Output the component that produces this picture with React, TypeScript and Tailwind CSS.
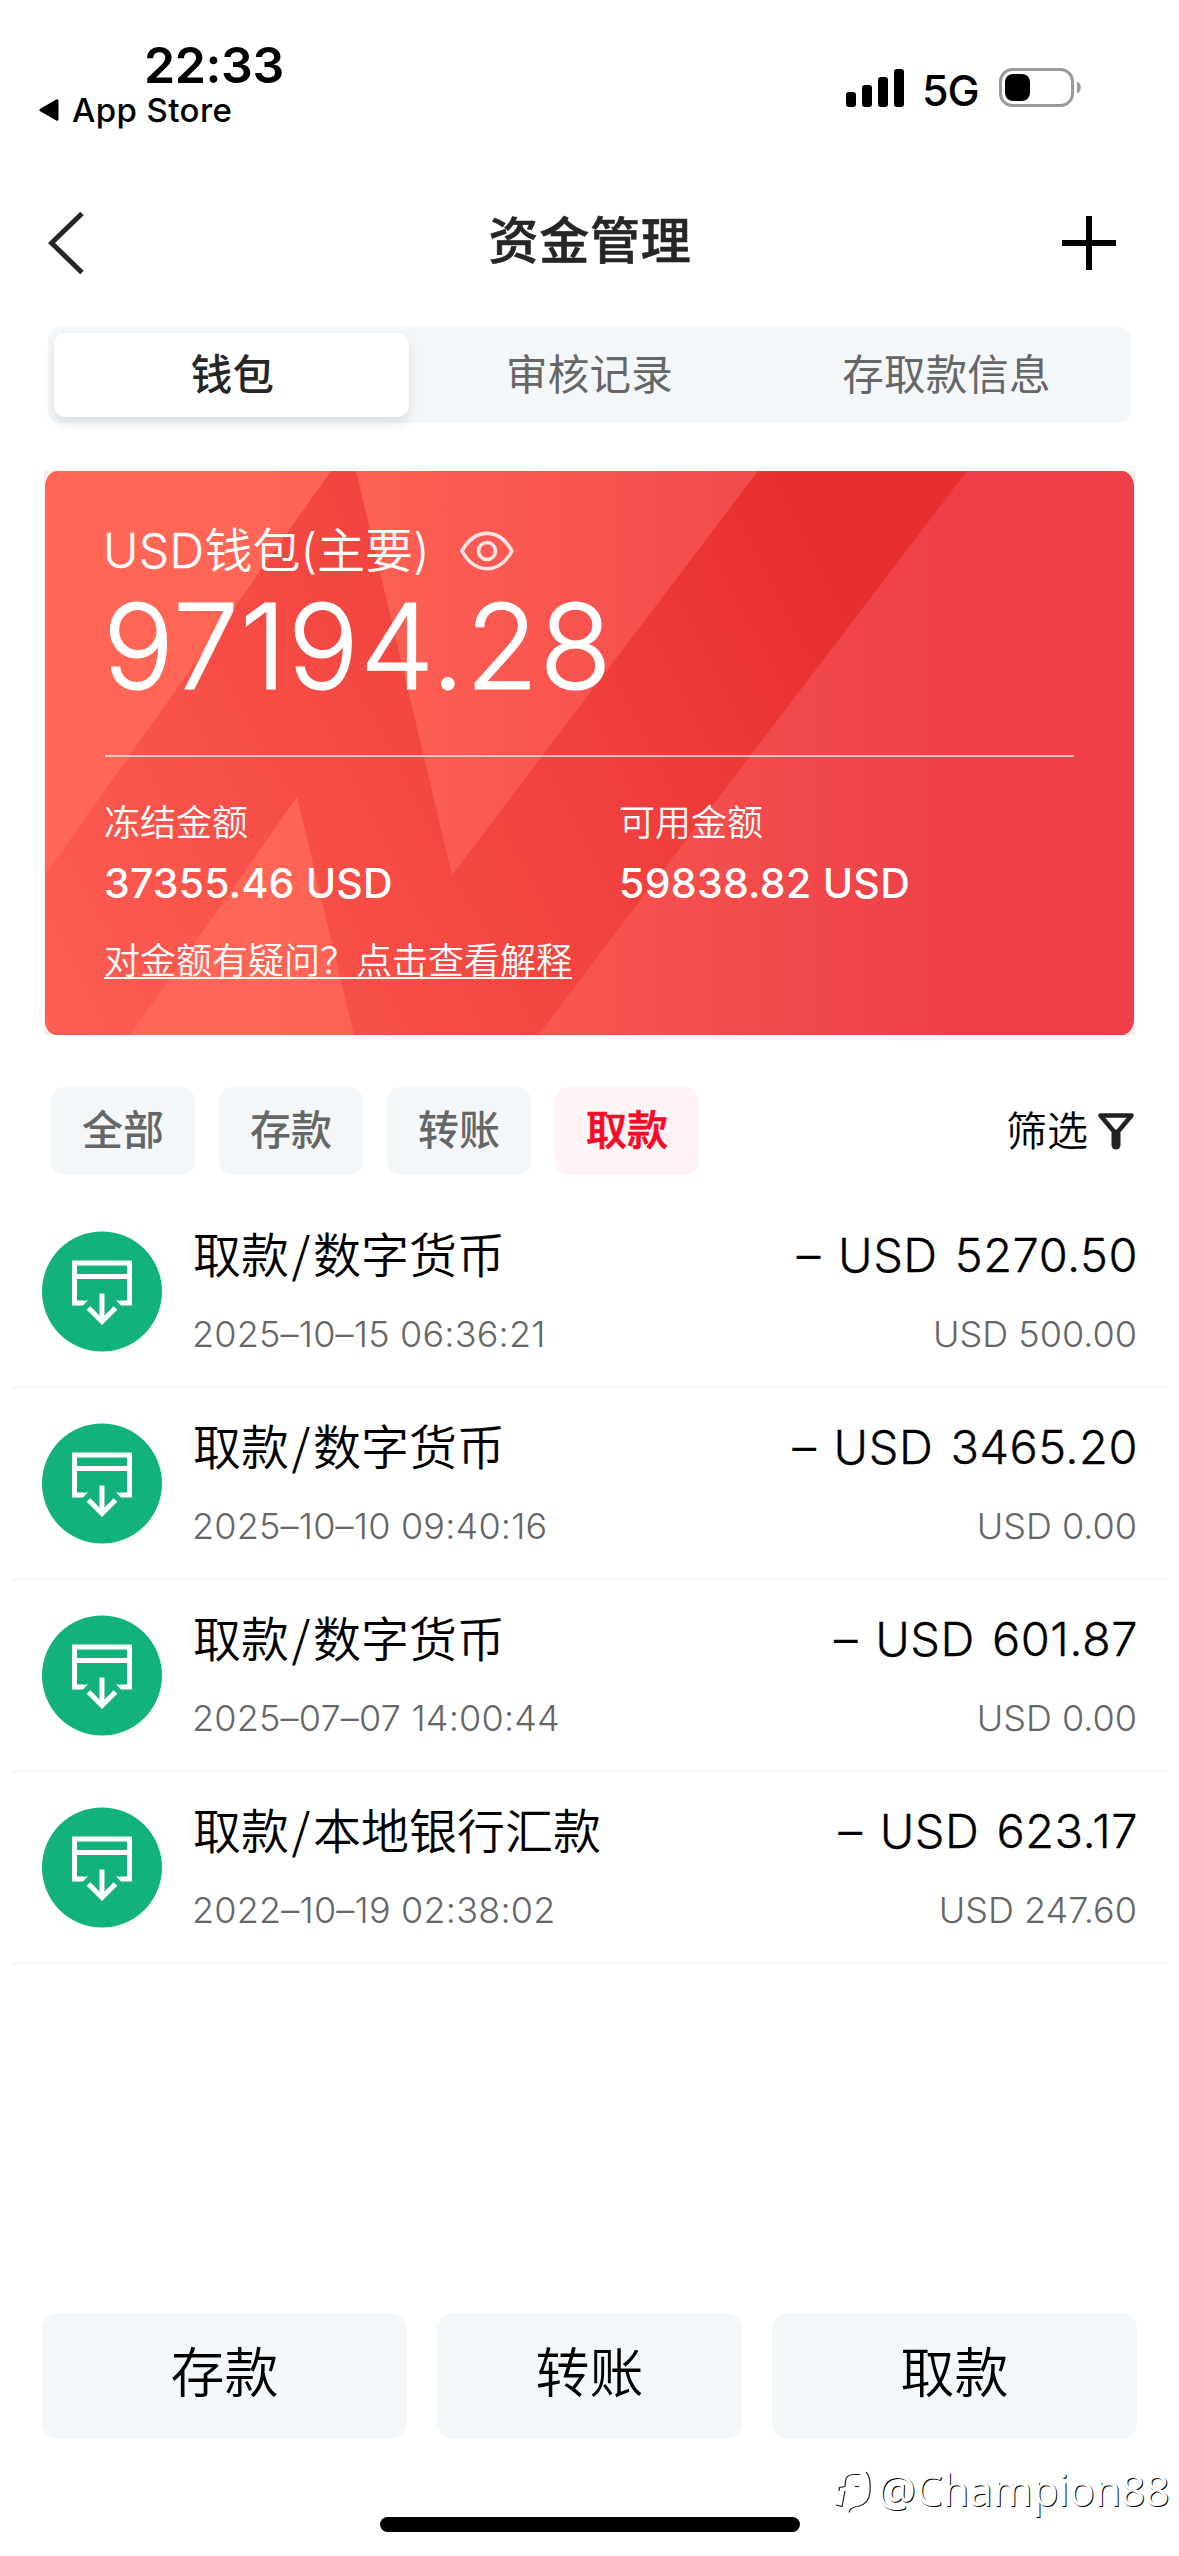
type Transaction = {
  method: string;
  time: string;
  amount: string;
  sub: string;
};

const transactions: Transaction[] = [
  { method: "数字货币", time: "2025–10–15 06:36:21", amount: "– USD 5270.50", sub: "USD 500.00" },
  { method: "数字货币", time: "2025–10–10 09:40:16", amount: "– USD 3465.20", sub: "USD 0.00" },
  { method: "数字货币", time: "2025–07–07 14:00:44", amount: "– USD 601.87", sub: "USD 0.00" },
  { method: "本地银行汇款", time: "2022–10–19 02:38:02", amount: "– USD 623.17", sub: "USD 247.60" },
];

function StatusBar() {
  return (
    <header className="flex h-[200px] justify-between text-black">
      <div className="pt-[35px]">
        <div className="pl-[144px] text-[50px] leading-[60px] font-semibold tracking-[-0.4px]">22:33</div>
        <div className="mt-[-5px] flex items-center pl-[39px] text-[33px] leading-[40px] font-medium tracking-[0.4px]">
          <svg className="mr-[13px]" width="20" height="22" viewBox="0 0 20 22">
            <path d="M18 1.8v18.4L2 11z" fill="#000" stroke="#000" strokeWidth="3" strokeLinejoin="round" />
          </svg>
          App Store
        </div>
      </div>
      <div className="box-content flex h-[50px] items-center pt-[65px] pr-[98px]">
        <svg width="58" height="38" viewBox="0 0 58 38" className="mt-[-5px]">
          <rect x="0" y="23" width="10" height="15" rx="3" />
          <rect x="16" y="16" width="10" height="22" rx="3" />
          <rect x="32" y="8" width="10" height="30" rx="3" />
          <rect x="48" y="0" width="10" height="38" rx="3" />
        </svg>
        <span className="ml-[18px] w-[77px] text-[43px] leading-[50px] font-medium tracking-[-1px]">5G</span>
        <svg width="82" height="40" viewBox="0 0 82 40" className="mt-[-4px]">
          <rect x="1.5" y="1.5" width="72" height="36" rx="12" fill="none" stroke="#9a9a9a" strokeWidth="3" />
          <rect x="6" y="6" width="25" height="27" rx="8" />
          <path d="M78 13.500c5 1.500 5 10.500 0 12z" fill="#9a9a9a" />
        </svg>
      </div>
    </header>
  );
}

function NavBar() {
  return (
    <nav className="flex h-[86px] items-center justify-between pr-[62px] pl-[48px]">
      <svg width="56" height="62" viewBox="0 0 56 62" fill="none" stroke="#262626" strokeWidth="5">
        <path d="M34 1.500L3.500 31L34 60.500" />
      </svg>
      <h1 className="pb-[5px] pl-[15px] text-[50px] leading-[60px] font-medium tracking-[0.8px] text-[#262626] [-webkit-text-stroke:0.6px_#262626]">
        资金管理
      </h1>
      <svg width="56" height="56" viewBox="0 0 56 56" stroke="#000" strokeWidth="6">
        <path d="M1 28H55M28 1V55" />
      </svg>
    </nav>
  );
}

function Tabs() {
  return (
    <div className="mx-[48px] mt-[41px] grid h-[96px] grid-cols-3 rounded-[12px] bg-[#f3f7fa] p-[6px] text-center text-[41.500px] leading-[84px] tracking-[0.2px] text-[#666]">
      <div className="mr-[2px] rounded-[12px] bg-white pl-[2px] font-medium text-[#262626] shadow-[0_6px_12px_rgba(0,0,0,0.1)]">钱包</div>
      <div>审核记录</div>
      <div>存取款信息</div>
    </div>
  );
}

function CardArt() {
  return (
    <svg className="absolute inset-0" width="1091" height="564" viewBox="0 0 1091 564">
      <defs>
        <linearGradient id="base" gradientUnits="userSpaceOnUse" x1="0" y1="0" x2="1091" y2="0">
          <stop offset="0.2" stopColor="#ff6656" />
          <stop offset="0.5" stopColor="#f8544f" />
          <stop offset="0.68" stopColor="#f0494b" />
          <stop offset="0.84" stopColor="#ee3f48" />
        </linearGradient>
        <linearGradient id="band" gradientUnits="userSpaceOnUse" x1="0" y1="564" x2="900" y2="100">
          <stop offset="0" stopColor="#fd5e53" />
          <stop offset="0.38" stopColor="#f44b44" />
          <stop offset="0.62" stopColor="#f03f3c" />
          <stop offset="0.9" stopColor="#e82e2e" />
        </linearGradient>
      </defs>
      <rect x="1" width="1089" height="564" rx="12" ry="16" fill="url(#base)" />
      <path d="M287 0H312L408 404L714 0H923L494 564H310L253 326L86 564H13Q1 563 1 548V404Z" fill="url(#band)" />
    </svg>
  );
}

function WalletCard() {
  return (
    <section className="relative mx-[44px] mt-[48px] h-[564px] bg-[#f8ecec] px-[61px] pt-[50px] text-white">
      <CardArt />
      <div className="relative">
        <div className="flex items-center text-[48px] leading-[60px] font-[350]">
          <span className="ml-[-2px] w-[357px] whitespace-nowrap">
            <span className="tracking-[0.4px] [-webkit-text-stroke:0.3px_#fff]">USD</span>钱包(主要)
          </span>
          <svg width="54" height="40" viewBox="0 0 54 40" fill="none" stroke="#fff" strokeOpacity="0.85" strokeWidth="3.600">
            <path d="M2 20C15-3.500 39-3.500 52 20C39 43.500 15 43.500 2 20Z" />
            <circle cx="27" cy="20" r="8.500" />
          </svg>
        </div>
        <div className="mt-[5px] ml-[-2px] text-[118px] leading-[120px] font-light tracking-[1.200px] [-webkit-text-stroke:1.200px_#fff]">
          97194.28
        </div>
        <div className="mt-[49px] h-[2px] bg-white/65" />
        <div className="mt-[44px] grid grid-cols-[514px_1fr]">
          <div className="ml-[-1px]">
            <div className="text-[36px] leading-[44px] font-[350]">冻结金额</div>
            <div className="mt-[13px] text-[41px] leading-[50px] font-medium tracking-[0.200px]">37355.46 USD</div>
          </div>
          <div>
            <div className="text-[36px] leading-[44px] font-[350]">可用金额</div>
            <div className="mt-[13px] text-[41px] leading-[50px] font-medium tracking-[0.300px]">59838.82 USD</div>
          </div>
        </div>
        <div className="mt-[28px] ml-[-1px] text-[36px] leading-[50px] font-[350] underline decoration-2 underline-offset-[3px] [text-decoration-skip-ink:none]">
          对金额有疑问？点击查看解释
        </div>
      </div>
    </section>
  );
}

function Filters() {
  return (
    <div className="mt-[52px] flex h-[88px] items-center pr-[45px] pl-[51px]">
      <div className="flex gap-[24px] text-center text-[41px] leading-[86px] font-medium text-[#666]">
        <div className="h-[88px] w-[144px] rounded-[14px] bg-[#f3f7fa]">全部</div>
        <div className="h-[88px] w-[144px] rounded-[14px] bg-[#f3f7fa]">存款</div>
        <div className="h-[88px] w-[144px] rounded-[14px] bg-[#f3f7fa]">转账</div>
        <div className="h-[88px] w-[144px] rounded-[14px] bg-[#fff4f5] text-[#f50a28] [-webkit-text-stroke:0.7px_#f50a28]">取款</div>
      </div>
      <div className="ml-auto flex items-center text-[41px] leading-[86px] font-[350] text-black">
        筛选
        <svg className="ml-[10px]" width="36" height="37" viewBox="0 0 36 37" fill="none" stroke="#222" strokeLinejoin="round" strokeLinecap="round">
          <path d="M2.500 2.500H33.500L18 21Z" strokeWidth="4.500" />
          <path d="M18 21V32" strokeWidth="9" />
        </svg>
      </div>
    </div>
  );
}

function WithdrawIcon() {
  return (
    <svg width="120" height="121" viewBox="0 0 120 120" fill="none">
      <circle cx="60" cy="60" r="60" fill="#13b27c" />
      <g stroke="#fff" strokeWidth="5">
        <path d="M32.500 45H87.500" />
        <path d="M60 62V88" />
        <path d="M46.500 76.500L60 90L73.500 76.500" />
      </g>
      <path fill="#fff" d="M30 29H90V74H79L74 69H85V34H35V69H46L41 74H30Z" />
    </svg>
  );
}

function Row({ item }: { item: Transaction }) {
  return (
    <li className="mx-[12px] flex h-[192px] border-b-2 border-[#f6f6f6] pr-[29px] pl-[30px]">
      <div className="pt-[35px]">
        <WithdrawIcon />
      </div>
      <div className="ml-[31px] pt-[28px]">
        <div className="h-[64px] text-[48px] leading-[64px] font-[350] text-black">
          取款
          <span className="inline-block w-[24px] text-center font-['Noto_Sans_CJK_SC',sans-serif] leading-none">/</span>
          {item.method}
        </div>
        <div className="mt-[22px] ml-[-1px] text-[36px] leading-[48px] font-light tracking-[0.200px] text-[#666]">{item.time}</div>
      </div>
      <div className="ml-auto pt-[27px] text-right">
        <div className="text-[47px] leading-[64px] font-light tracking-[0.5px] text-black [word-spacing:3.500px] [-webkit-text-stroke:0.3px_#000]">
          {item.amount}
        </div>
        <div className="mt-[23px] mr-[1px] text-[36px] leading-[48px] font-light text-[#666]">{item.sub}</div>
      </div>
    </li>
  );
}

function Watermark() {
  return (
    <div className="absolute right-[10px] bottom-[36px] flex items-center">
      <svg width="44" height="48" viewBox="0 0 44 48" fill="none" stroke="#222" strokeWidth="1.200">
        <path d="M27 8.500H20Q13 9 12.500 15L12 20.500L6.500 21.500L6 25" />
        <path d="M12 25L9 40.500L3 39" />
        <path d="M33 6Q38 10 37 26Q36 38 25 40.500Q20 40.500 17 44L16 46.500" />
        <path d="M22 20.500H26" />
      </svg>
      <span className="font-['Noto_Sans',sans-serif] text-[43px] leading-[60px] font-normal tracking-[-0.400px] text-white [text-shadow:1px_1px_0_#000]">
        @Champion88
      </span>
    </div>
  );
}

export default function App() {
  return (
    <div className="relative flex h-[2556px] w-[1179px] flex-col overflow-hidden bg-white font-['Inter','Noto_Sans_CJK_SC',sans-serif]">
      <StatusBar />
      <NavBar />
      <Tabs />
      <WalletCard />
      <Filters />
      <ul className="mt-[21px]">
        {transactions.map((item) => (
          <Row key={item.time} item={item} />
        ))}
      </ul>
      <footer className="mt-auto">
        <div className="grid grid-cols-[365px_305px_365px] gap-[30px] pl-[42px] text-center text-[54px] leading-[121px] font-[350] text-black">
          <div className="h-[126px] rounded-[16px] bg-[#f3f7fa]">存款</div>
          <div className="h-[126px] rounded-[16px] bg-[#f3f7fa]">转账</div>
          <div className="h-[126px] rounded-[16px] bg-[#f3f7fa]">取款</div>
        </div>
        <div className="mx-auto mt-[78px] mb-[24px] h-[15px] w-[420px] rounded-full bg-black" />
      </footer>
      <Watermark />
    </div>
  );
}
